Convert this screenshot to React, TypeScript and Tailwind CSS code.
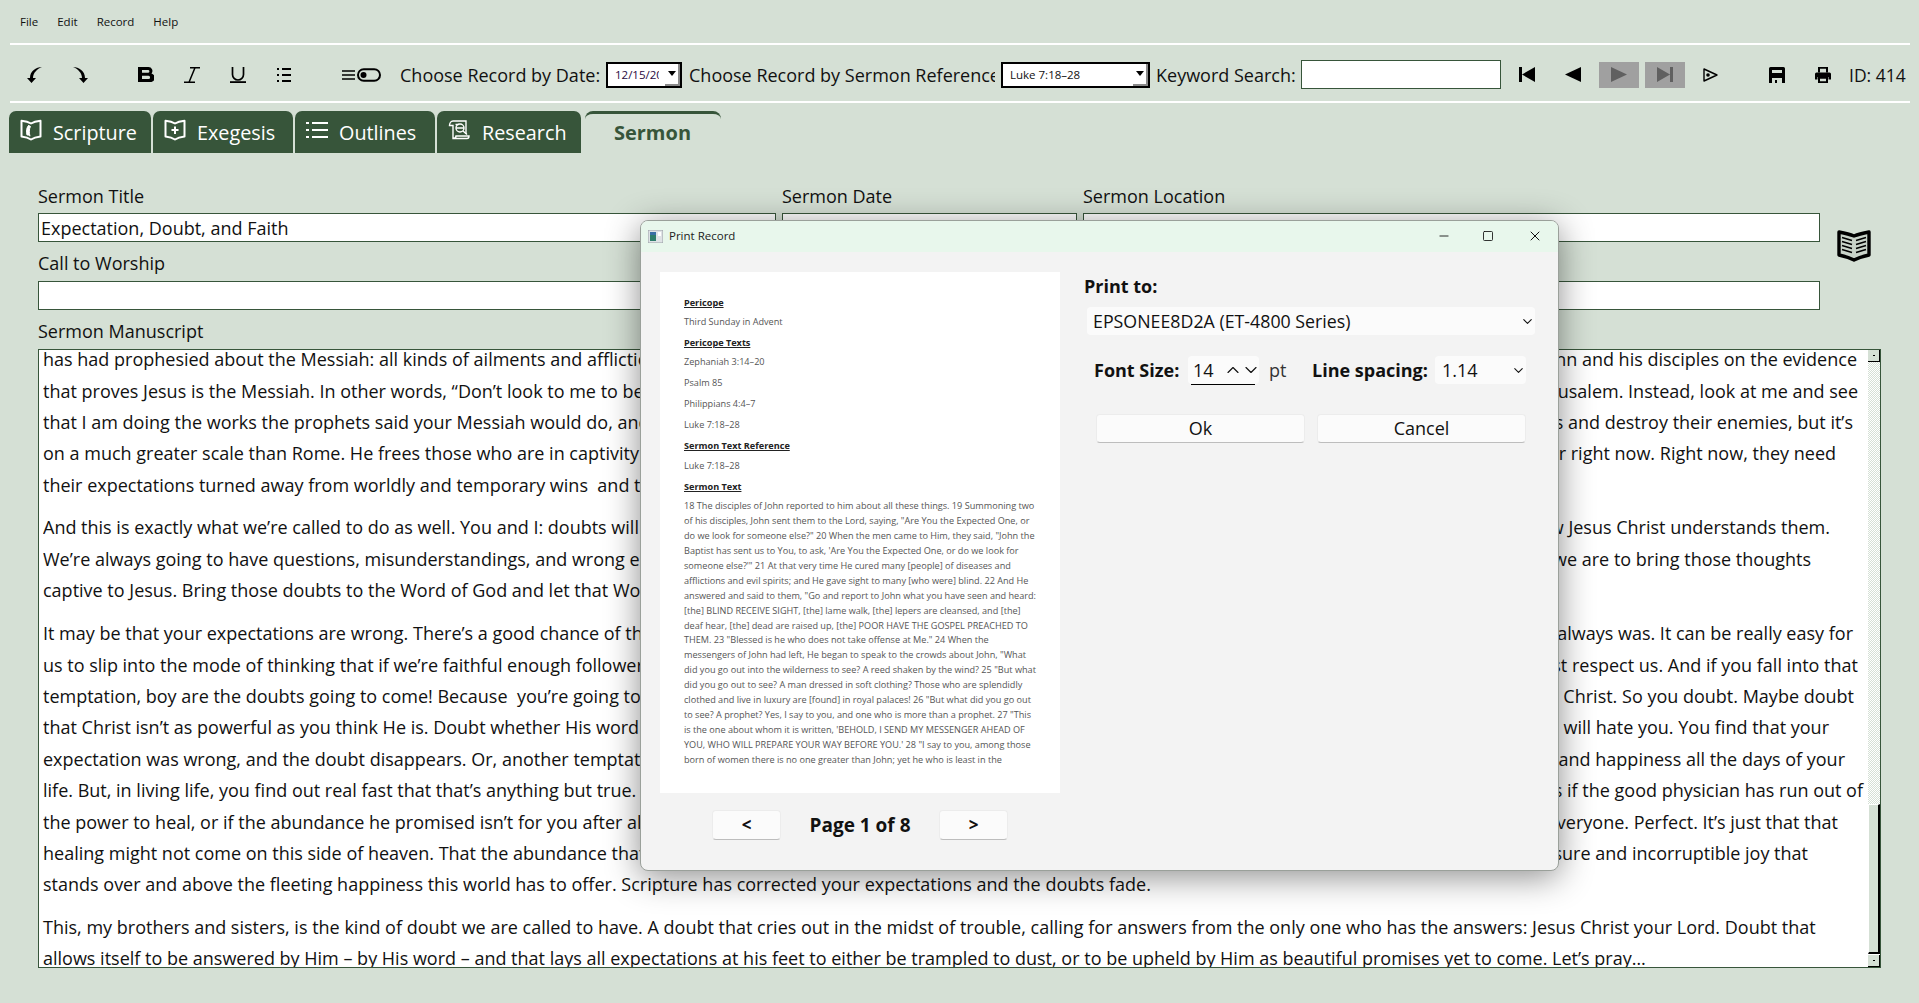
import React from "react";
import { ChevronDown, ChevronUp, Minus, Square, X } from "lucide-react";

const F = "font-['Open_Sans','Liberation_Sans',sans-serif]";

type L = { l: string; r?: string; w?: string; cls?: string };

const lines: L[] = [
  { l: "has had prophesied about the Messiah: all kinds of ailments and afflictions", r: "ohn and his disciples on the evidence", w: "w-[814px]" },
  { l: "that proves Jesus is the Messiah. In other words, “Don’t look to me to be", r: "Jerusalem. Instead, look at me and see", w: "w-[815px]" },
  { l: "that I am doing the works the prophets said your Messiah would do, and", r: "ls and destroy their enemies, but it’s", w: "w-[810px]" },
  { l: "on a much greater scale than Rome. He frees those who are in captivity", r: "ur right now. Right now, they need", w: "w-[793px]" },
  { l: "their expectations turned away from worldly and temporary wins  and to" },
  { l: "And this is exactly what we’re called to do as well. You and I: doubts will", r: "ow Jesus Christ understands them.", w: "w-[787px]", cls: "mt-[11px]" },
  { l: "We’re always going to have questions, misunderstandings, and wrong exp", r: "we are to bring those thoughts", w: "w-[768px]" },
  { l: "captive to Jesus. Bring those doubts to the Word of God and let that Word" },
  { l: "It may be that your expectations are wrong. There’s a good chance of that", r: "t always was. It can be really easy for", w: "w-[810px]", cls: "mt-[12px]" },
  { l: "us to slip into the mode of thinking that if we’re faithful enough followers", r: "st respect us. And if you fall into that", w: "w-[815px]" },
  { l: "temptation, boy are the doubts going to come! Because  you’re going to", r: "in Christ. So you doubt. Maybe doubt", w: "w-[811px]" },
  { l: "that Christ isn’t as powerful as you think He is. Doubt whether His word", r: "ld will hate you. You find that your", w: "w-[786px]" },
  { l: "expectation was wrong, and the doubt disappears. Or, another temptation", r: "ss and happiness all the days of your", w: "w-[802px]" },
  { l: "life. But, in living life, you find out real fast that that’s anything but true.", r: "as if the good physician has run out of", w: "w-[820px]" },
  { l: "the power to heal, or if the abundance he promised isn’t for you after all", r: "everyone. Perfect. It’s just that that", w: "w-[795px]" },
  { l: "healing might not come on this side of heaven. That the abundance that", r: "sure and incorruptible joy that", w: "w-[765px]" },
  { l: "stands over and above the fleeting happiness this world has to offer. Scripture has corrected your expectations and the doubts fade." },
  { l: "This, my brothers and sisters, is the kind of doubt we are called to have. A doubt that cries out in the midst of trouble, calling for answers from the only one who has the answers: Jesus Christ your Lord. Doubt that", cls: "mt-[11px]" },
  { l: "allows itself to be answered by Him – by His word – and that lays all expectations at his feet to either be trampled to dust, or to be upheld by Him as beautiful promises yet to come. Let’s pray…" },
];

const preview = [
  "18 The disciples of John reported to him about all these things. 19 Summoning two",
  "of his disciples, John sent them to the Lord, saying, \"Are You the Expected One, or",
  "do we look for someone else?\" 20 When the men came to Him, they said, \"John the",
  "Baptist has sent us to You, to ask, 'Are You the Expected One, or do we look for",
  "someone else?'\" 21 At that very time He cured many [people] of diseases and",
  "afflictions and evil spirits; and He gave sight to many [who were] blind. 22 And He",
  "answered and said to them, \"Go and report to John what you have seen and heard:",
  "[the] BLIND RECEIVE SIGHT, [the] lame walk, [the] lepers are cleansed, and [the]",
  "deaf hear, [the] dead are raised up, [the] POOR HAVE THE GOSPEL PREACHED TO",
  "THEM. 23 \"Blessed is he who does not take offense at Me.\" 24 When the",
  "messengers of John had left, He began to speak to the crowds about John, \"What",
  "did you go out into the wilderness to see? A reed shaken by the wind? 25 \"But what",
  "did you go out to see? A man dressed in soft clothing? Those who are splendidly",
  "clothed and live in luxury are [found] in royal palaces! 26 \"But what did you go out",
  "to see? A prophet? Yes, I say to you, and one who is more than a prophet. 27 \"This",
  "is the one about whom it is written, 'BEHOLD, I SEND MY MESSENGER AHEAD OF",
  "YOU, WHO WILL PREPARE YOUR WAY BEFORE YOU.' 28 \"I say to you, among those",
  "born of women there is no one greater than John; yet he who is least in the",
];

function BookIcon({ plus }: { plus?: boolean }) {
  return (
    <svg width="22" height="22" viewBox="0 0 22 22" fill="none" stroke="white" strokeWidth="2" strokeLinejoin="round">
      <path d="M11 4.500C8.500 3 5 2.200 1.500 1.800v15.700c3.500.4 7 1.300 9.500 3 2.500-1.700 6-2.600 9.500-3V1.800C17 2.200 13.500 3 11 4.500z" />
      {plus ? (
        <path d="M11 7.500v7.500M7.500 11h7" />
      ) : (
        <path d="M9 6C6.500 8 6 12.500 7 16c1.200-.2 2.300.3 3 1.200-1-3-1-7 .5-10" fill="white" strokeWidth="1" />
      )}
    </svg>
  );
}

function ResearchIcon() {
  return (
    <svg width="23" height="22" viewBox="0 0 23 22" fill="none" stroke="white" strokeWidth="1.400">
      <path d="M5 2h13v13M5 2C3 2 1.500 4 1.500 6.500H5v13h14c1.500 0 2-1.500 2-2.500H8c0 1-.5 2.500-3 2.500" />
      <circle cx="12" cy="9" r="4" />
      <path d="M8 9h8M15 12l4 3.500M7.500 5.500h3" />
    </svg>
  );
}

function Tab({ w, icon, children }: { w: string; icon: React.ReactNode; children: string }) {
  return (
    <div className={`${w} gap-[11px] h-[42px] bg-[#37553a] rounded-t-[7px] flex items-center pl-[11px] text-white text-[19.800px] shrink-0`}>
      <span className="-mt-[4px]">{icon}</span>
      <span className="mt-[1px]">{children}</span>
    </div>
  );
}

function Nav({ kind, color }: { kind: "first" | "prev" | "play" | "last"; color: string }) {
  return (
    <svg className="shrink-0" width="16" height="15" viewBox="0 0 16 15" fill={color}>
      {kind === "first" && <path d="M0 0h3v15H0zM16 0v15L3 7.500z" />}
      {kind === "prev" && <path d="M16 0v15L0 7.500z" />}
      {kind === "play" && <path d="M0 0v15l16-7.500z" />}
      {kind === "last" && <path d="M0 0v15l13-7.500zM13 0h3v15h-3z" />}
    </svg>
  );
}

function Win98Combo({ w, text, clip, textCls }: { w: string; text: string; clip: string; textCls: string }) {
  return (
    <div className={`${w} h-[26px] border-2 border-black bg-white flex items-center relative shrink-0 overflow-hidden`}>
      <span className={`ml-[7px] ${clip} text-[11.500px] whitespace-nowrap overflow-hidden ${textCls}`}>{text}</span>
      <div className="absolute right-0 top-0 bottom-0 w-[15px] flex items-center justify-center border-r-2 border-b-2 border-[#8a8a8a] bg-white">
        <svg width="8" height="5" viewBox="0 0 8 5"><path d="M0 0h8L4 5z" fill="black" /></svg>
      </div>
    </div>
  );
}

function Line({ L }: { L: L }) {
  return (
    <div className={`flex h-[31.400px] items-center whitespace-pre ${L.cls ?? ""}`}>
      <span className={L.r ? "w-[1000px] shrink-0 overflow-hidden" : ""}>{L.l}</span>
      {L.r ? <span className={`${L.w} text-right shrink-0`}>{L.r}</span> : null}
    </div>
  );
}

function Field({ w, label, value }: { w: string; label: string; value?: string }) {
  return (
    <div className={w}>
      <div className="h-[31px] leading-[29px]">{label}</div>
      <div className="h-[29px] bg-white border border-[#37553a] pl-[2px] leading-[29px] whitespace-nowrap">{value}</div>
    </div>
  );
}

export default function App() {
  return (
    <div className={`${F} relative w-[1919px] h-[1003px] bg-[#d5e0d5] text-[#111] overflow-hidden text-[18px]`}>
      {/* menu */}
      <div className="h-[43px] flex items-center pl-[20px] gap-[19px] text-[11.500px] pt-[1px]">
        <span>File</span><span>Edit</span><span>Record</span><span>Help</span>
      </div>
      <div className="ml-[10px] mr-[9px] h-[2px] bg-white" />
      {/* toolbar */}
      <div className="h-[56px] ml-[10px] pt-[3px] flex items-center">
        <svg className="ml-[17px] shrink-0" width="15" height="16" viewBox="0 0 15 16"><path d="M15 0C9 0 3 4 3 11H0l4.500 5L9 11H6C6 6 10 2 15 0z" fill="black" /></svg>
        <svg className="ml-[31px] shrink-0" width="15" height="16" viewBox="0 0 15 16"><path d="M0 0c6 0 12 4 12 11h3l-4.500 5L6 11h3C9 6 5 2 0 0z" fill="black" /></svg>
        <svg className="ml-[50px] shrink-0" width="16" height="15" viewBox="0 0 16 15"><path fillRule="evenodd" d="M0 0h10.500a3.900 3.900 0 0 1 3 6.400A4.200 4.200 0 0 1 11 15H0zM4 3v2.800h6a1.400 1.400 0 0 0 0-2.800zM4 8.800V12h6.500a1.600 1.600 0 0 0 0-3.200z" fill="black" /></svg>
        <svg className="ml-[30px] shrink-0" width="16" height="16" viewBox="0 0 16 16" fill="none" stroke="black" strokeWidth="1.500"><path d="M6 .8h10M0 15.200h11M11 .8L5 15.200" /></svg>
        <svg className="ml-[30px] shrink-0" width="16" height="16" viewBox="0 0 16 16" fill="none" stroke="black" strokeWidth="1.700"><path d="M2.500 0v7.500a5.500 5.500 0 0 0 11 0V0" /><path d="M0 15.100h16" strokeWidth="1.800" /></svg>
        <svg className="ml-[31px] shrink-0" width="14" height="14" viewBox="0 0 14 14" fill="none" stroke="black" strokeWidth="2"><path d="M0 1h2M5 1h9M0 7h2M5 7h9M0 13h2M5 13h9" /></svg>
        <svg className="ml-[51px] shrink-0" width="39" height="14" viewBox="0 0 39 14" fill="none">
          <path d="M0 3h13M0 7h13M0 11h13" stroke="black" strokeWidth="1.700" />
          <rect x="16" y="1.200" width="22" height="11.600" rx="5.800" stroke="black" strokeWidth="2" />
          <circle cx="21.500" cy="7" r="3" fill="black" />
        </svg>
        <span className="ml-[19px] whitespace-nowrap w-[206px] shrink-0 mt-[1px]">Choose Record by Date:</span>
        <Win98Combo w="w-[76px]" clip="w-[44px]" text="12/15/2025" textCls="text-[#2a0a40]" />
        <span className="ml-[7px] w-[306px] shrink-0 overflow-hidden whitespace-nowrap mt-[1px]">Choose Record by Sermon Reference:</span>
        <span className="w-[6px] shrink-0" />
        <Win98Combo w="w-[149px]" clip="w-[110px]" text="Luke 7:18–28" textCls="" />
        <span className="ml-[6px] w-[145px] shrink-0 whitespace-nowrap mt-[1px]">Keyword Search:</span>
        <div className="w-[200px] h-[29px] bg-white border border-[#37553a] shrink-0" />
        <div className="ml-[18px]"><Nav kind="first" color="black" /></div>
        <div className="ml-[30px]"><Nav kind="prev" color="black" /></div>
        <div className="ml-[18px] w-[40px] h-[26px] bg-[#a0a0a0] flex items-center justify-center shrink-0"><Nav kind="play" color="#606060" /></div>
        <div className="ml-[6px] w-[40px] h-[26px] bg-[#a0a0a0] flex items-center justify-center shrink-0"><Nav kind="last" color="#606060" /></div>
        <svg className="ml-[18px] shrink-0" width="15" height="14" viewBox="0 0 15 14" fill="none">
          <path d="M1 1v12l13-6z" stroke="black" strokeWidth="1.400" strokeLinejoin="round" />
          <circle cx="5" cy="7" r="1.800" fill="black" />
        </svg>
        <svg className="ml-[51px] shrink-0" width="16" height="16" viewBox="0 0 16 16"><path d="M0 1.500Q0 0 1.500 0h13Q16 0 16 1.500V16h-3v-5H3v5H0z" fill="black" /><rect x="3" y="3" width="10" height="3" fill="#d5e0d5" /><rect x="6" y="13" width="2" height="3" fill="black" /></svg>
        <svg className="ml-[30px] shrink-0" width="16" height="16" viewBox="0 0 16 16"><path fillRule="evenodd" d="M3 0h10v5.500H3zM5 1.800v3.700h6V1.800z" fill="black" /><path d="M0 7Q0 5.500 1.500 5.500h13Q16 5.500 16 7v5.500h-2.500V10h-11v2.500H0z" fill="black" /><path fillRule="evenodd" d="M3 10h10v6H3zM5 11.800v2.400h6v-2.400z" fill="black" /></svg>
        <span className="ml-[18px] whitespace-nowrap mt-[1px] text-[17.500px]">ID: 414</span>
      </div>
      <div className="ml-[10px] mr-[9px] h-[2px] bg-white" />
      {/* tabs */}
      <div className="ml-[9px] mt-[8px] flex h-[42px]">
        <Tab w="w-[142px]" icon={<BookIcon />}>Scripture</Tab>
        <div className="w-[2px]" />
        <Tab w="w-[140px]" icon={<BookIcon plus />}>Exegesis</Tab>
        <div className="w-[2px]" />
        <Tab w="w-[140px]" icon={
          <svg width="22" height="20" viewBox="0 0 22 20" stroke="white" strokeWidth="1.800"><path d="M6 3h16M6 10h16M6 17h16M0 3h3M0 10h3M0 17h3" /></svg>
        }>Outlines</Tab>
        <div className="w-[2px]" />
        <Tab w="w-[144px]" icon={<ResearchIcon />}>Research</Tab>
        <div className="ml-[4px] w-[136px] h-[42px] border-t-[3px] border-[#37553a] rounded-t-[8px] flex items-center justify-center font-bold text-[#37553a] text-[20px] pr-[1px] pb-[2px]">Sermon</div>
      </div>
      {/* form */}
      <div className="pl-[38px] pr-[38px] mt-[29px] w-[1919px]">
        <div className="flex gap-[6px] h-[62px]">
          <Field w="w-[738px]" label="Sermon Title" value="Expectation, Doubt, and Faith" />
          <Field w="w-[295px]" label="Sermon Date" />
          <Field w="w-[737px]" label="Sermon Location" />
          <svg className="ml-[11px] mt-[48px] shrink-0" width="34" height="32" viewBox="0 0 34 32" fill="none">
            <path d="M2 2C7 3 12 4 17 6c5-2 10-3 15-4v23c-5 1-10 2.500-15 5-5-2.500-10-4-15-5z" fill="#c9d3c9" stroke="black" strokeWidth="3.400" strokeLinejoin="round" />
            <path d="M5 7.500l10 3M5 11.500l10 3M5 15.500l10 3M5 19.500l10 3M29 7.500l-10 3M29 11.500l-10 3M29 15.500l-10 3M29 19.500l-10 3" stroke="black" strokeWidth="1.500" />
          </svg>
        </div>
        <div className="w-[1782px]">
          <div className="h-[37px] leading-[38px]">Call to Worship</div>
          <div className="h-[29px] bg-white border border-[#37553a]" />
        </div>
        <div className="h-[39px] leading-[42px]">Sermon Manuscript</div>
        <div className="relative w-[1843px] h-[619px] bg-white border border-[#37553a] overflow-hidden pl-[4px]">
          <div className="-mt-[6px]">
            {lines.map((L, i) => <Line key={i} L={L} />)}
          </div>
          {/* legacy scrollbar */}
          <div className="absolute right-0 top-0 bottom-0 w-[12px] flex flex-col bg-white">
            <div className="h-[12px] bg-[#d5e0d5] border-r border-b border-black flex items-center justify-center shrink-0">
              <span className="w-[2px] h-[1px] bg-black" />
            </div>
            <div className="h-[442px] shrink-0 bg-[repeating-conic-gradient(#d5e0d5_0%_25%,#ffffff_0%_50%)] bg-[length:2px_2px]" />
            <div className="h-[150px] shrink-0 bg-[#d5e0d5] border-l border-t border-white border-r-2 border-r-black border-b-2 border-b-black" />
            <div className="flex-1" />
            <div className="h-[12px] bg-[#d5e0d5] border-r border-b border-black flex items-center justify-center shrink-0">
              <span className="w-[2px] h-[1px] bg-black" />
            </div>
          </div>
        </div>
      </div>

      {/* Print dialog */}
      <div className="absolute left-[640px] top-[220px] w-[919px] h-[651px] rounded-[8px] overflow-hidden bg-[#f3f3f3] border border-[#9aa09a] shadow-[0_6px_34px_rgba(0,0,0,0.45)] flex flex-col">
        <div className="h-[31px] bg-[#e8f7ec] flex items-center pl-[7px] pb-[1px] text-[11.500px] text-[#222] shrink-0">
          <svg width="15" height="13" viewBox="0 0 15 13"><rect x="0" y="0" width="15" height="13" fill="#dfe3e6" stroke="#9aa0a6" /><rect x="2" y="2" width="6" height="9" fill="#2f7d6b" /><rect x="2" y="2" width="6" height="3" fill="#3a6ea5" /><rect x="10" y="2" width="3" height="4" fill="#fff" /></svg>
          <span className="ml-[6px]">Print Record</span>
          <div className="ml-auto flex items-center text-[#111]">
            <Minus size={14} strokeWidth={1.500} className="mr-[31px]" />
            <Square size={12} strokeWidth={1.700} className="mr-[33px]" />
            <X size={16} strokeWidth={1.500} className="mr-[15px]" />
          </div>
        </div>
        <div className="flex flex-1">
          <div className="w-[420px] pl-[19px] pt-[20px] shrink-0">
            <div className="w-[400px] h-[521px] bg-white pl-[24px] pt-[23px] text-[9.150px] leading-[15px] text-[#555] whitespace-nowrap">
              <div className="font-bold underline text-[#222] h-[15px]">Pericope</div>
              <div className="mt-[4px]">Third Sunday in Advent</div>
              <div className="font-bold underline text-[#222] mt-[6px]">Pericope Texts</div>
              <div className="mt-[4px]">Zephaniah 3:14–20</div>
              <div className="mt-[6px]">Psalm 85</div>
              <div className="mt-[6px]">Philippians 4:4–7</div>
              <div className="mt-[6px]">Luke 7:18–28</div>
              <div className="font-bold underline text-[#222] mt-[6px]">Sermon Text Reference</div>
              <div className="mt-[5px]">Luke 7:18–28</div>
              <div className="font-bold underline text-[#222] mt-[6px]">Sermon Text</div>
              <div className="mt-[4px]">
                {preview.map((p, i) => <div key={i} className="h-[14.950px]">{p}</div>)}
              </div>
            </div>
            <div className="flex items-center mt-[17px] ml-[52px]">
              <div className="w-[69px] h-[30px] bg-[#fbfbfb] rounded-[4px] border border-[#ececec] border-b-[#bdbdbd] flex items-center justify-center font-bold text-[17px]">&lt;</div>
              <div className="w-[158px] text-center font-bold text-[19px] text-[#111] pt-[1px]">Page 1 of 8</div>
              <div className="w-[69px] h-[30px] bg-[#fbfbfb] rounded-[4px] border border-[#ececec] border-b-[#bdbdbd] flex items-center justify-center font-bold text-[17px]">&gt;</div>
            </div>
          </div>
          <div className="flex-1 pl-[23px] pt-[21px]">
            <div className="font-bold h-[26px] leading-[26px]">Print to:</div>
            <div className="ml-[3px] mt-[8px] w-[448px] h-[28px] bg-[#fbfbfb] rounded-[4px] flex items-center pl-[6px] text-[17.800px]">
              <span className="flex-1">EPSONEE8D2A (ET-4800 Series)</span>
              <ChevronDown size={15} strokeWidth={1.700} />
            </div>
            <div className="flex items-center mt-[21px] ml-[10px] h-[28px]">
              <span className="font-bold w-[94px] whitespace-nowrap">Font Size:</span>
              <div className="relative w-[71px] h-[28px] bg-[#fbfbfb] rounded-[4px] flex items-center pl-[5px]">
                <span className="flex-1">14</span>
                <ChevronUp size={20} strokeWidth={1.400} />
                <ChevronDown size={20} strokeWidth={1.400} className="-ml-[2px] -mr-[2px]" />
                <div className="absolute left-[3px] right-[4px] -bottom-[1px] h-[1px] bg-black" />
              </div>
              <span className="ml-[10px] w-[43px] text-[#333]">pt</span>
              <span className="font-bold w-[123px] whitespace-nowrap">Line spacing:</span>
              <div className="w-[91px] h-[28px] bg-[#fbfbfb] rounded-[4px] flex items-center pl-[7px]">
                <span className="flex-1">1.14</span>
                <ChevronDown size={15} strokeWidth={1.700} />
              </div>
            </div>
            <div className="flex gap-[12px] ml-[12px] mt-[30px]">
              <div className="w-[209px] h-[29px] bg-[#fbfbfb] rounded-[4px] border border-[#ececec] border-b-[#bdbdbd] flex items-center justify-center">Ok</div>
              <div className="w-[209px] h-[29px] bg-[#fbfbfb] rounded-[4px] border border-[#ececec] border-b-[#bdbdbd] flex items-center justify-center">Cancel</div>
            </div>
          </div>
        </div>
      </div>
    </div>
  );
}
